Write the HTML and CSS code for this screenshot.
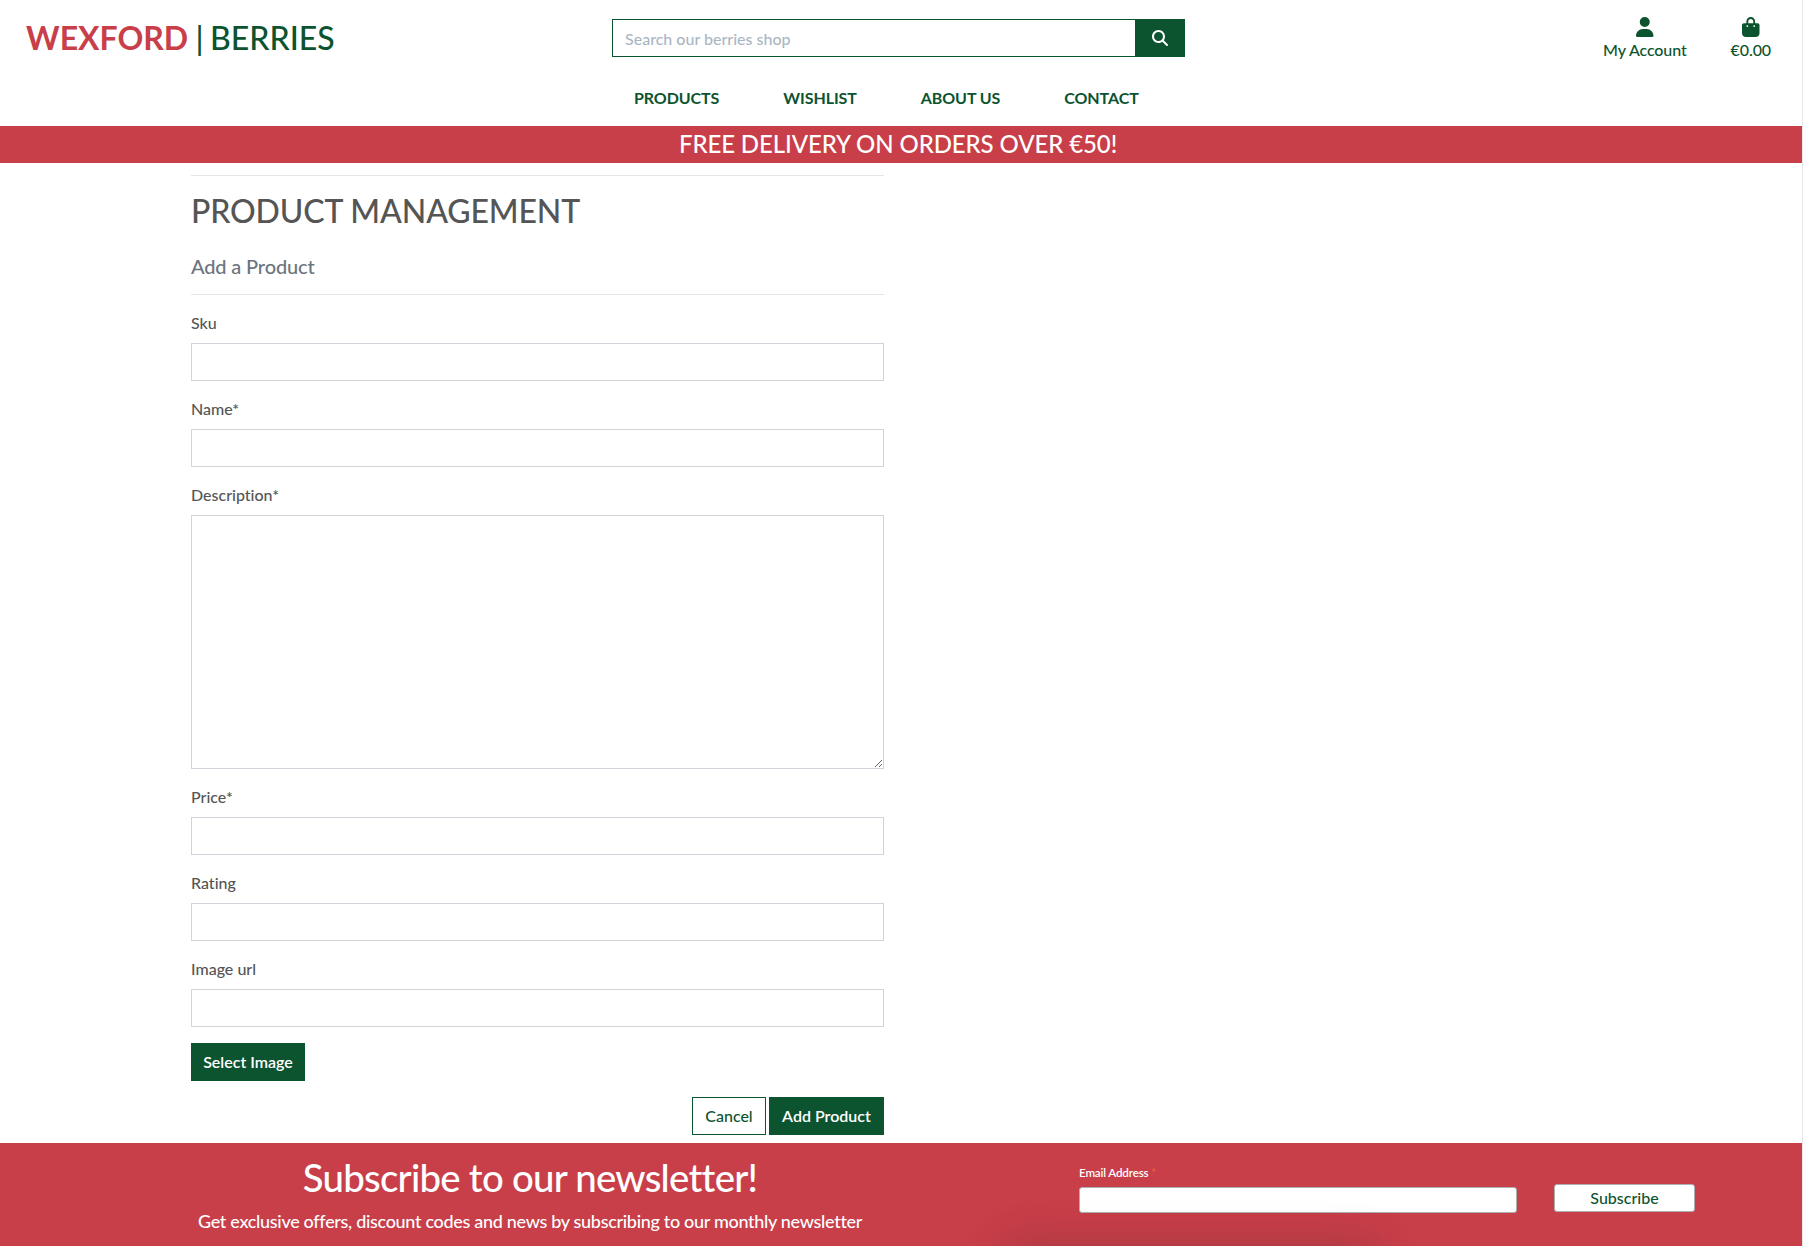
FILE: index.html
```html
<!DOCTYPE html>
<html lang="en">
<head>
<meta charset="utf-8">
<title>Wexford Berries</title>
<link rel="stylesheet" href="styles.css">
</head>
<body>
<header class="site-header">
  <div class="topbar">
    <a class="logo"><strong>WEXFORD</strong><span class="divider"> | </span>BERRIES</a>
    <form class="search">
      <input class="search-input" type="text" placeholder="Search our berries shop">
      <button class="search-button" type="button" aria-label="Search">
        <svg viewBox="0 0 512 512" width="16" height="16"><path fill="currentColor" d="M416 208c0 45.900-14.900 88.300-40 122.700L502.600 457.400c12.500 12.500 12.500 32.800 0 45.300s-32.800 12.500-45.300 0L330.700 376c-34.400 25.200-76.800 40-122.700 40C93.100 416 0 322.900 0 208S93.100 0 208 0S416 93.100 416 208zM208 352a144 144 0 1 0 0-288 144 144 0 1 0 0 288z"/></svg>
      </button>
    </form>
    <div class="account-links">
      <a class="account-link account">
        <svg viewBox="0 0 448 512" width="17.500" height="20"><path fill="currentColor" d="M224 256A128 128 0 1 0 224 0a128 128 0 1 0 0 256zm-45.700 48C79.800 304 0 383.800 0 482.300C0 498.700 13.300 512 29.700 512H418.300c16.400 0 29.700-13.300 29.700-29.700C448 383.800 368.200 304 269.700 304H178.300z"/></svg>
        <span>My Account</span>
      </a>
      <a class="account-link bag">
        <svg viewBox="0 0 448 512" width="17.500" height="20"><path fill="currentColor" d="M160 112c0-35.300 28.700-64 64-64s64 28.700 64 64v48H160V112zm-48 48H48c-26.500 0-48 21.500-48 48V416c0 53 43 96 96 96H352c53 0 96-43 96-96V208c0-26.500-21.500-48-48-48H336V112C336 50.100 285.900 0 224 0S112 50.100 112 112v48zm24 48a24 24 0 1 1 0 48 24 24 0 1 1 0-48zm152 24a24 24 0 1 1 48 0 24 24 0 1 1-48 0z"/></svg>
        <span>€0.00</span>
      </a>
    </div>
  </div>
  <nav class="main-nav"><a>PRODUCTS</a><a>WISHLIST</a><a>ABOUT US</a><a>CONTACT</a></nav>
</header>
<div class="banner">FREE DELIVERY ON ORDERS OVER €50!</div>
<main class="content">
  <hr>
  <h2>PRODUCT MANAGEMENT</h2>
  <h5>Add a Product</h5>
  <hr class="form-rule">
  <form class="product-form">
    <label>Sku<input type="text"></label>
    <label>Name*<input type="text"></label>
    <label>Description*<textarea></textarea></label>
    <label>Price*<input type="text"></label>
    <label>Rating<input type="text"></label>
    <label>Image url<input type="text"></label>
    <button class="btn btn-solid select-image" type="button">Select Image</button>
    <div class="actions">
      <button class="btn btn-outline" type="button">Cancel</button>
      <button class="btn btn-solid add-product" type="button">Add Product</button>
    </div>
  </form>
</main>
<footer class="newsletter">
  <div class="newsletter-copy">
    <h1>Subscribe to our newsletter!</h1>
    <p>Get exclusive offers, discount codes and news by subscribing to our monthly newsletter</p>
  </div>
  <form class="signup">
    <label>Email Address <span class="required">*</span><input type="email"></label>
    <button type="button">Subscribe</button>
  </form>
</footer>
</body>
</html>
```

FILE: styles.css
```css
* { box-sizing: border-box; }
body {
  margin: 0;
  height: 1246px;
  overflow: hidden;
  border-right: 1px solid #e6e6e6;
  background: #fff;
  color: #555;
  font: 500 16px/24px Lato, "Liberation Sans", sans-serif;
  font-variant-ligatures: none;
}
input, button, textarea { font: inherit; }
svg { display: block; }
.site-header { height: 126px; color: #0c532f; }
.topbar { display: flex; height: 76px; }
.logo { width: 586px; margin-left: 26px; padding-top: 19px; font-size: 32px; line-height: 38px; font-weight: 500; white-space: pre; }
.logo strong { color: #c83e49; font-weight: 700; }
.divider { letter-spacing: -0.8px; }
.search { display: flex; width: 573px; height: 38px; margin-top: 19px; }
.search-input { flex: 1; min-width: 0; padding: 4px 12px 2px; border: 1px solid #0c532f; border-right: 0; border-radius: 0; }
.search-input::placeholder { color: #aab7c4; opacity: 1; }
.search-button { display: grid; place-items: center; width: 50px; padding: 0; border: 0; background: #0c532f; color: #fff; }
.account-links { display: flex; margin-left: auto; padding: 16.5px 31px 0 0; gap: 44px; font-weight: 500; letter-spacing: -0.1px; }
.account-link { display: flex; flex-direction: column; align-items: center; gap: 1.5px; }
.main-nav { display: flex; gap: 64px; padding: 10px 0 0 634px; font-weight: 700; letter-spacing: -0.08px; }
.banner { height: 37px; background: #c83e49; color: #fff; text-align: center; font-size: 24px; line-height: 35px; letter-spacing: -0.1px; padding-right: 6px; }
.content { width: 693px; height: 980px; margin-left: 191px; padding-top: 12px; }
hr { height: 1px; margin: 0; border: 0; background: #e5e5e5; }
h2 { margin: 15px 0 24px; font-size: 32px; line-height: 39px; font-weight: 500; letter-spacing: -0.12px; }
h5 { margin: 0; color: #6c757d; font-size: 20px; line-height: 24px; font-weight: 500; letter-spacing: -0.15px; }
.form-rule { margin: 16px 0 16px; }
.product-form label { display: block; margin-bottom: 16px; }
.product-form input, textarea { display: block; width: 100%; height: 38px; margin-top: 8px; border: 1px solid #ced4da; border-radius: 0; background: #fff; }
.product-form textarea { height: 254px; resize: vertical; }
.btn { height: 38px; padding: 0; border: 1px solid #0c532f; border-radius: 0; }
.btn-solid { background: #0c532f; color: #fff; font-weight: 600; }
.btn-outline { width: 74px; background: #fff; color: #0c532f; font-weight: 500; }
.select-image { display: block; width: 114px; }
.add-product { width: 115px; }
.actions { display: flex; justify-content: flex-end; gap: 3px; margin-top: 16px; }
.newsletter {
  position: relative;
  display: flex;
  height: 103px;
  overflow: hidden;
  background: #c83e49;
  color: #fff;
}
/* soft shade along the bottom edge */
.newsletter::after {
  content: "";
  position: absolute;
  left: 1010px;
  top: 106px;
  width: 360px;
  height: 60px;
  box-shadow: 0 0 44px 4px rgba(60, 40, 45, .24);
  pointer-events: none;
}
.newsletter-copy { width: 664px; margin-left: 198px; padding-top: 9px; text-align: center; white-space: nowrap; }
.newsletter h1 { margin: 0; font-size: 38.4px; line-height: 50px; font-weight: 500; letter-spacing: -0.75px; }
.newsletter p { margin: 7px 0 0; font-size: 18px; line-height: 24px; letter-spacing: -0.31px; }
.signup { display: flex; margin-left: 217px; padding-top: 21px; }
.signup label { display: block; width: 438px; font-size: 11.6px; line-height: 17px; letter-spacing: -0.15px; font-weight: 600; }
.signup input { display: block; width: 438px; height: 26px; margin-top: 6px; border: 1px solid #abb0b2; border-radius: 3px; background: #fff; }
.signup button { width: 141px; height: 28px; margin: 20px 0 0 37px; padding: 0; border: 1px solid #abb0b2; border-radius: 3px; background: #fff; color: #0c532f; line-height: 20px; }
.required { color: #e85c41; font-weight: 700; }
```
